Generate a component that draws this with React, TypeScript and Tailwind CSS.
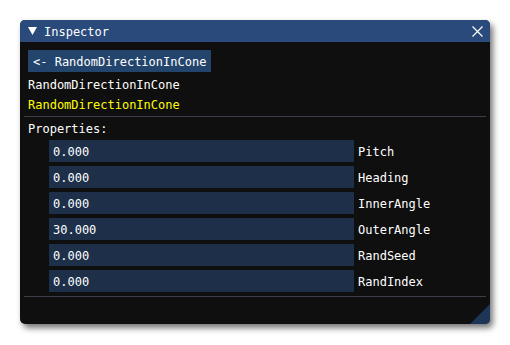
const rows = [
  { value: "0.000", label: "Pitch" },
  { value: "0.000", label: "Heading" },
  { value: "0.000", label: "InnerAngle" },
  { value: "30.000", label: "OuterAngle" },
  { value: "0.000", label: "RandSeed" },
  { value: "0.000", label: "RandIndex" },
];

export default function App() {
  return (
    <div className="w-[510px] h-[345px] bg-white p-5 font-['DejaVu_Sans_Mono',monospace] text-[12px] leading-[16px]">
      <div className="relative w-[470px] h-[304px] rounded-[5px] overflow-hidden bg-[#0f0f0f] shadow-[3px_4px_6px_rgba(0,0,0,0.55)] flex flex-col">
        {/* title bar */}
        <div className="h-[22px] bg-[#294a7a] flex items-center pl-2 pr-[7px] text-white">
          <svg width="9" height="8" viewBox="0 0 9 8" className="mr-[7px]">
            <polygon points="0,0 9,0 4.5,8" fill="#ffffff" />
          </svg>
          <span className="pt-[2px]">Inspector</span>
          <svg width="11" height="11" viewBox="0 0 11 11" className="ml-auto">
            <path d="M0.5 0.5 L10.5 10.5 M10.5 0.5 L0.5 10.5" stroke="#ffffff" strokeWidth="1.2" />
          </svg>
        </div>

        <div className="flex flex-col px-2 pt-2 text-white">
          <div className="self-start h-[22px] px-[5px] pt-px flex items-center bg-[#23456d]">
            &lt;- RandomDirectionInCone
          </div>
          <div className="mt-1 pt-px leading-[17px]">RandomDirectionInCone</div>
          <div className="mt-[2px] pt-px leading-[17px] text-[#ffff00]">RandomDirectionInCone</div>
          <div className="mt-[2px] -mx-1 h-px bg-[#3e3e48]" />
          <div className="mt-[3px] pt-px leading-[17px]">Properties:</div>
          <div className="mt-[2px] flex flex-col gap-1 pl-[21px]">
            {rows.map((r) => (
              <div key={r.label} className="flex items-center">
                <div className="w-[305px] h-[22px] bg-[#1d2f49] pl-1 pt-px flex items-center">
                  {r.value}
                </div>
                <span className="ml-1 pt-px">{r.label}</span>
              </div>
            ))}
          </div>
          <div className="mt-1 -mx-1 h-px bg-[#3e3e48]" />
        </div>

        {/* resize grip */}
        <svg width="20" height="20" viewBox="0 0 20 20" className="absolute right-0 bottom-0">
          <polygon points="20,0 20,20 0,20" fill="#1d3657" />
        </svg>
      </div>
    </div>
  );
}
